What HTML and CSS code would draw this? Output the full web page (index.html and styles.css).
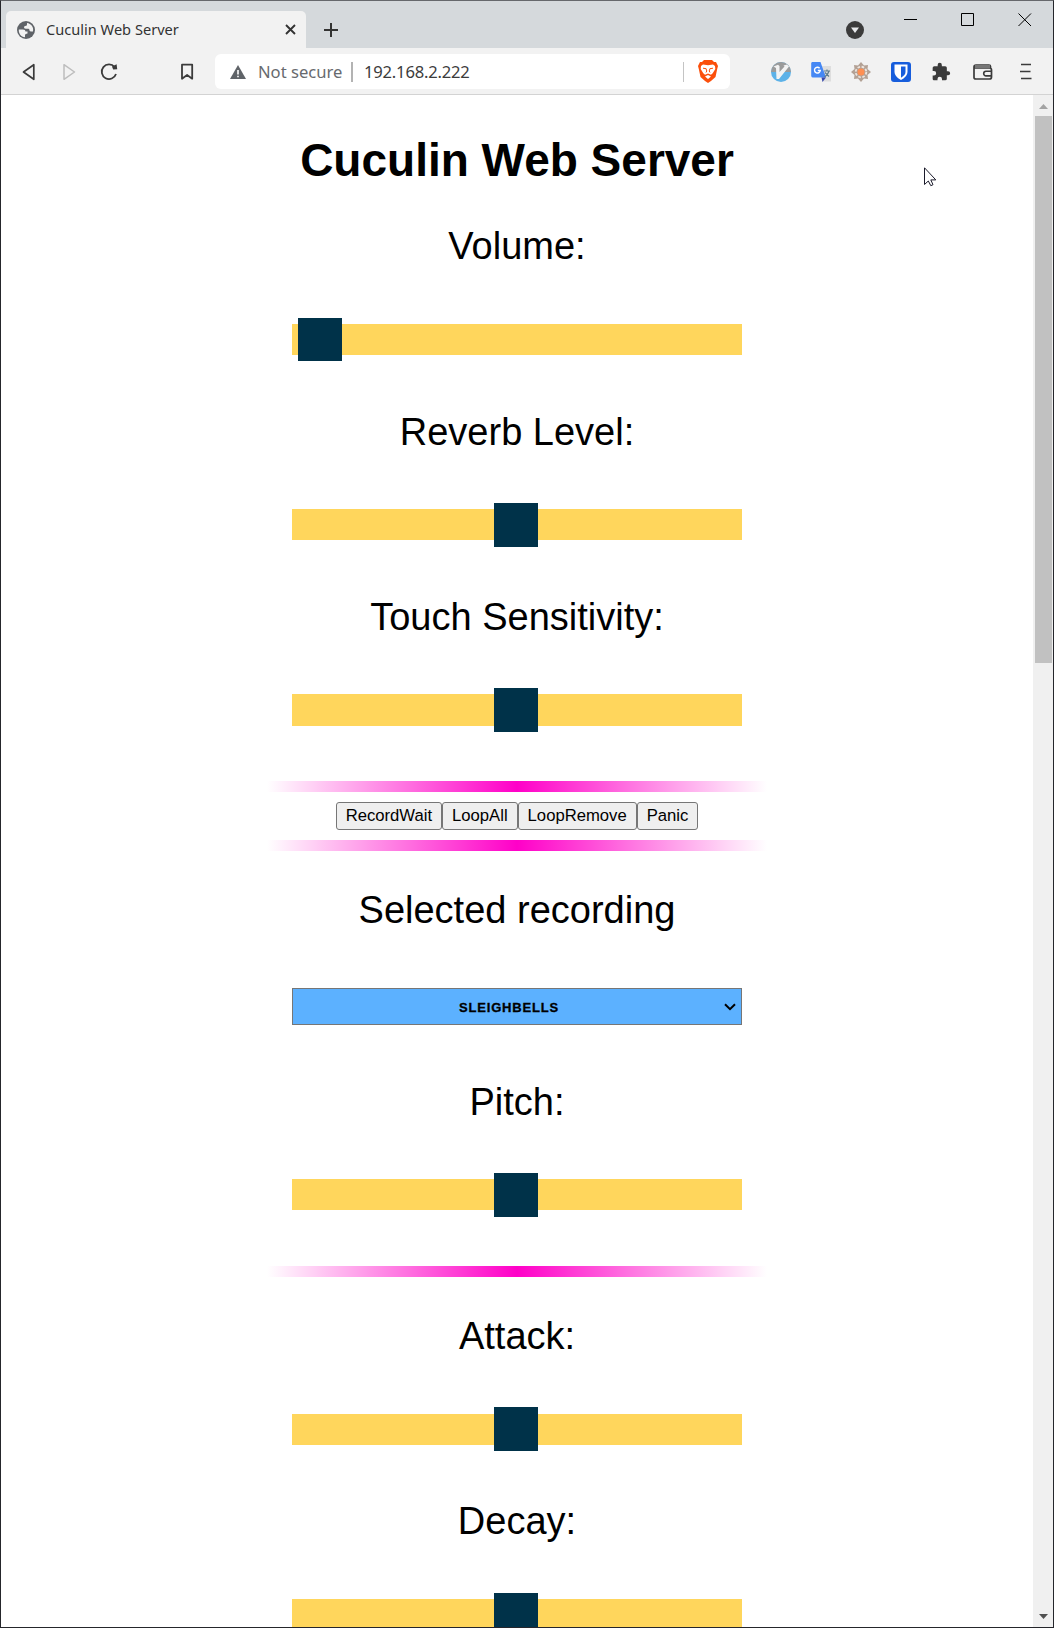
FILE: index.html
```html
<!DOCTYPE html>
<html lang="en">
<head>
<meta charset="utf-8">
<title>Cuculin Web Server</title>
<link rel="stylesheet" href="styles.css">
</head>
<body>
<div class="window">
  <header class="tabstrip">
    <div class="tab">
      <svg class="globe" width="18" height="18" viewBox="0 0 18 18"><circle cx="9" cy="9" r="9" fill="#5f6368"/><path d="M1.800 8.500H6Q8.500 8.600 8.500 10.500H10.500V12.500Q8 12.500 8 14V16.200C4 15.800 1.400 12.500 1.800 8.500ZM10 2V3.500Q10 5 8 5 7 5 7 6.500 7.200 7.800 9 7.800H11.500Q12.500 8 12.500 9.500 12.800 10.500 14 10.500H16C17 6 14 2.500 10 2Z" fill="#f2f2f2"/></svg>
      <span class="tab-title">Cuculin Web Server</span>
      <svg class="tab-close" width="11" height="11" viewBox="0 0 11 11"><path d="M1 1l9 9M10 1l-9 9" stroke="#333" stroke-width="1.900"/></svg>
    </div>
    <svg class="new-tab" width="16" height="16" viewBox="0 0 16 16"><path d="M8 1v14M1 8h14" stroke="#333" stroke-width="2"/></svg>
    <svg class="tab-search" width="18" height="18" viewBox="0 0 18 18"><circle cx="9" cy="9" r="9" fill="#3b3b3b"/><path d="M5 6.500h8l-4 5.500z" fill="#e8eaec"/></svg>
    <svg class="win-btn minimize" width="14" height="14" viewBox="0 0 14 14"><path d="M0 6.500h13" stroke="#000"/></svg>
    <svg class="win-btn maximize" width="14" height="14" viewBox="0 0 14 14"><path d="M.5.5h12v12H.5z" fill="none" stroke="#000"/></svg>
    <svg class="win-btn quit" width="14" height="14" viewBox="0 0 14 14"><path d="M.5.500l12.500 12.500M13 .500L.5 13" stroke="#000"/></svg>
  </header>
  <nav class="toolbar">
    <svg class="ico back" width="20" height="20" viewBox="0 0 20 20"><path d="M14.800 2.700v14.600L4.500 10z" fill="none" stroke="#3b3b3b" stroke-width="1.700" stroke-linejoin="round"/></svg>
    <svg class="ico forward" width="20" height="20" viewBox="0 0 20 20"><path d="M5 2.700v14.600L15.500 10z" fill="none" stroke="#bdbdbd" stroke-width="1.500" stroke-linejoin="round"/></svg>
    <svg class="ico reload" width="20" height="20" viewBox="0 0 20 20"><path d="M15.600 5A7.300 7.300 0 1 0 17 12" fill="none" stroke="#3b3b3b" stroke-width="1.800"/><path d="M13 4.500 17.600 2.300 18.200 7.300 14.200 7.500z" fill="#3b3b3b"/></svg>
    <svg class="ico bookmark" width="20" height="20" viewBox="0 0 20 20"><path d="M5 2.700h10.200v14L10.100 13 5 16.700z" fill="none" stroke="#3b3b3b" stroke-width="1.800" stroke-linejoin="round"/></svg>
    <div class="address">
      <svg width="16" height="14" viewBox="0 0 16 14"><path d="M8 0l8 14H0z" fill="#5f6368"/><path d="M8 5v4.500M8 10.700v1.600" stroke="#fff" stroke-width="1.600"/></svg>
      <span class="insecure">Not secure</span>
      <i class="bar"></i>
      <span class="ip">192.168.2.222</span>
      <i class="bar end"></i>
      <svg class="shield" width="20" height="23" viewBox="0 0 20 23"><path d="M6 0h8l2 2h2l2 4-.8 3-1.700 8L13 21l-3 2-3-2-4.500-4L.8 9 0 6l2-4h2z" fill="#fb4f0b"/><path d="M3 6l2-1.500 5 .8 5-.8L17 6l.3 3-2.600 4.300-1.700 1.500L10 13.500 7 14.800 5.300 13.300 2.700 9zM7 16.500l3-1.500 3 1.500-3 2.500z" fill="#fff"/><path d="M5 8.200l3 .5M15 8.200l-3 .5M8 8.500l.8 2.500L8 12.500M12 8.500l-.8 2.500 .8 1.500" stroke="#fb4f0b" stroke-width="1" fill="none"/></svg>
    </div>
    <svg class="ext first" width="20" height="20" viewBox="0 0 20 20"><circle cx="10" cy="10" r="10" fill="#5db2e8"/><path d="M0 10a10 10 0 0 1 20 0z" fill="#9b9b9b"/><path d="M2.500 4.500 7 2.700 8.500 4V10L13.500 4.500 12.500 3.500 16 2.500 18 4.500 8 17H5.500L5 6z" fill="#f3f3f3"/></svg>
    <svg class="ext" width="20" height="20" viewBox="0 0 20 20"><path d="M9 4h11v15.500H12z" fill="#dedede"/><path d="M1 0h8.500L15 15.500H2A1.800 1.800 0 0 1 .2 14V1z" fill="#4688f4"/><path d="M10.500 15.500H15L11.500 20z" fill="#3949ab"/><path d="M13 9h6M16 7.500V9M18 9q-1 4-4.500 6M14 10.500l4 4" stroke="#607d8b" stroke-width="1.200" fill="none"/><path d="M8.600 6.200A2.900 2.900 0 1 0 9.300 8.500H6.800" stroke="#fff" stroke-width="1.400" fill="none"/></svg>
    <svg class="ext" width="20" height="20" viewBox="0 0 20 20"><path d="M10 0l3 3.500 4-.5-.5 4L20 10l-3.500 3 .5 4-4-.5-3 3.500-3-3.500-4 .5.500-4L0 10l3.500-3L3 3l4 .5z" fill="#b3a195"/><circle cx="10" cy="10" r="5.300" fill="none" stroke="#ece5df" stroke-width="1.800" stroke-dasharray="2.600 1.560"/><circle cx="10" cy="10" r="3.500" fill="#ff8f52"/></svg>
    <svg class="ext" width="20" height="20" viewBox="0 0 20 20"><rect width="20" height="20" rx="3" fill="#175ddc"/><path d="M3.500 2.500h13V10q0 4.500-6.500 8Q3.500 14.500 3.500 10z" fill="#fff"/><path d="M10 4.500h4.500V10q0 3-4.500 5.700z" fill="#175ddc"/></svg>
    <svg class="ext" width="20" height="20" viewBox="0 0 24 24"><path d="M20.500 11H19V7a2 2 0 0 0-2-2h-4V3.500a2.500 2.500 0 0 0-5 0V5H4a2 2 0 0 0-2 2v3.800h1.500a2.700 2.700 0 0 1 0 5.400H2V20c0 1.100.9 2 2 2h3.800v-1.500a2.700 2.700 0 0 1 5.400 0V22H17a2 2 0 0 0 2-2v-4h1.500a2.500 2.500 0 0 0 0-5z" fill="#3b3b3b"/></svg>
    <svg class="ext wallet" width="20" height="20" viewBox="0 0 20 20"><path d="M17.500 6V4.500Q17.500 3 16 3H3Q1 3 1 5v10.500Q1 17 3 17h13.500q2 0 2-2V8q0-2-2-2H3Q1 6 1 4.500" fill="none" stroke="#3b3b3b" stroke-width="1.700"/><path d="M2 3h15v3H2z" fill="#777"/><path d="M19 9.300h-6a2.300 2.300 0 0 0 0 4.600h6" fill="none" stroke="#3b3b3b" stroke-width="1.600"/></svg>
    <svg class="ext menu" width="12" height="20" viewBox="0 0 12 20"><path d="M1 2.500h10M0 9.500h10.500M1 16.500h10.500" stroke="#3b3b3b" stroke-width="1.700"/></svg>
  </nav>
  <div class="viewport">
    <main class="page">
      <h1>Cuculin Web Server</h1>
      <section class="field volume"><p>Volume:</p><div class="track"><div class="thumb"></div></div></section>
      <section class="field tight"><p>Reverb Level:</p><div class="track"><div class="thumb"></div></div></section>
      <section class="field tight touch"><p>Touch Sensitivity:</p><div class="track"><div class="thumb"></div></div></section>
      <hr>
      <div class="actions"><button>RecordWait</button><button>LoopAll</button><button>LoopRemove</button><button>Panic</button></div>
      <hr>
      <section class="field recording"><p>Selected recording</p>
        <div class="select"><span>SLEIGHBELLS</span><svg width="12" height="8" viewBox="0 0 12 8"><path d="M1 1.200l5 5 5-5" fill="none" stroke="#000" stroke-width="2"/></svg></div>
      </section>
      <section class="field tight pitch"><p>Pitch:</p><div class="track"><div class="thumb"></div></div></section>
      <hr>
      <section class="field attack"><p>Attack:</p><div class="track"><div class="thumb"></div></div></section>
      <section class="field"><p>Decay:</p><div class="track"><div class="thumb"></div></div></section>
    </main>
    <aside class="scrollbar">
      <svg width="9" height="5" viewBox="0 0 9 5"><path d="M0 5L4.500 0 9 5z" fill="#a3a3a3"/></svg>
      <div class="scroll-thumb"></div>
      <svg class="down" width="9" height="5" viewBox="0 0 9 5"><path d="M0 0h9L4.500 5z" fill="#505050"/></svg>
    </aside>
  </div>
  <svg class="cursor" width="13" height="20" viewBox="0 0 13 20"><path d="M.5.800V17.500L4.300 14 6.800 18.700 9 17.700 6.800 12.900H11.800z" fill="#fff" stroke="#1b1b2b"/></svg>
</div>
</body>
</html>
```
FILE: styles.css
```css
* { box-sizing: border-box; }
body { margin: 0; }
svg { display: block; flex: none; }
.window {
  position: relative;
  width: 1054px;
  height: 1628px;
  display: flex;
  flex-direction: column;
  border: 1px solid #25262b;
  border-top-color: #66686c;
  background: #fff;
  overflow: hidden;
  font-family: "Liberation Sans", Arial, sans-serif;
}

/* Browser chrome */
.tabstrip {
  flex: none;
  height: 47px;
  display: flex;
  align-items: flex-start;
  padding: 10px 0 0 5px;
  background: #d5d9dc;
  font-family: "Noto Sans", sans-serif;
}
.tab {
  width: 300px;
  height: 37px;
  display: flex;
  align-items: center;
  padding: 0 10px 0 11px;
  border-radius: 5px 5px 0 0;
  background: #f2f2f2;
}
.tab-title { margin-left: 11px; padding-bottom: 2px; font-size: 14.6px; line-height: 20px; color: #333; white-space: nowrap; }
.tab-close { margin-left: auto; }
.new-tab { margin: 11px 0 0 17px; }
.tab-search { margin: 10px 0 0 507px; }
.win-btn { margin-top: 2px; }
.minimize { margin-left: 40px; }
.maximize { margin-left: 43px; }
.quit { margin-left: 43px; }
.toolbar {
  flex: none;
  height: 47px;
  display: flex;
  align-items: center;
  padding: 1px 0 0 18px;
  background: #f2f2f2;
  border-bottom: 1px solid #d3d3d3;
  font-family: "Noto Sans", sans-serif;
}
.forward { margin-left: 20px; }
.reload { margin-left: 20px; }
.bookmark { margin-left: 58px; }
.address {
  width: 515px;
  height: 35px;
  display: flex;
  align-items: center;
  margin-left: 18px;
  padding: 0 12px 0 15px;
  border-radius: 6px;
  background: #fff;
  font-size: 16.6px;
  line-height: 24px;
}
.insecure { width: 93px; padding-left: 12px; white-space: nowrap; color: #676a6e; }
.ip { margin-left: 11px; white-space: nowrap; color: #3c3c3c; font-size: 16.6px; letter-spacing: -.2px; }
.bar { width: 2px; height: 20px; margin-left: 12px; background: #b3b3b3; }
.bar.end { width: 1px; margin-left: auto; background: #c4c4c4; }
.shield { margin-left: 14px; }
.ext { margin-left: 20px; }
.ext.first { margin-left: 41px; }
.wallet { margin-left: 22px; }
.menu { margin-left: 27px; }

/* Page */
.viewport { flex: 1; min-height: 0; display: flex; }
.page {
  width: 1032px;
  display: flex;
  flex-direction: column;
  align-items: center;
  overflow: hidden;
}
.page > * { flex: none; }
h1 { margin: 39px 0 38px; font-size: 46px; line-height: 52px; }
.field { width: 450px; display: flex; flex-direction: column; align-items: stretch; margin-bottom: 55px; }
.field p { height: 100px; margin: 0; font-size: 38px; line-height: 44px; text-align: center; white-space: nowrap; }
.tight p { height: 99px; }
.track { position: relative; height: 31px; background: #ffd65c; }
.thumb { position: absolute; left: 202px; top: -6px; width: 44px; height: 44px; background: #003249; }
.volume .thumb { left: 6px; height: 43px; }
.touch .track { height: 32px; }
.pitch { margin-bottom: 56px; }
.attack { margin: 37px 0 54px; }
.attack .thumb { top: -7px; }
.recording { margin-top: 37px; }
hr {
  width: 500px;
  height: 11px;
  margin: 0;
  border: 0;
  background: linear-gradient(to right, rgba(255, 0, 200, 0), #ff00c8, rgba(255, 0, 200, 0));
}
.actions { display: flex; margin: 10px 0; }
button {
  height: 28px;
  padding: 0 9px;
  border: 1px solid #767676;
  border-radius: 3px;
  background: #efefef;
  color: #000;
  font: 16.67px/22px "Liberation Sans", Arial, sans-serif;
}
.select {
  height: 37px;
  display: flex;
  align-items: center;
  padding-right: 5px;
  border: 1px solid #767676;
  background: #5cb1ff;
}
.select span { flex: 1; padding: 2px 0 0 1px; text-align: center; font-size: 13px; font-weight: bold; letter-spacing: .8px; -webkit-text-stroke: .3px #000; }

.scrollbar { width: 20px; display: flex; flex-direction: column; align-items: center; padding: 9px 0 8px; background: #f0f0f0; }
.scroll-thumb { width: 17px; height: 547px; margin-top: 7px; background: #c1c1c1; }
.down { margin-top: auto; }
.cursor { position: absolute; left: 923px; top: 166px; }
```
